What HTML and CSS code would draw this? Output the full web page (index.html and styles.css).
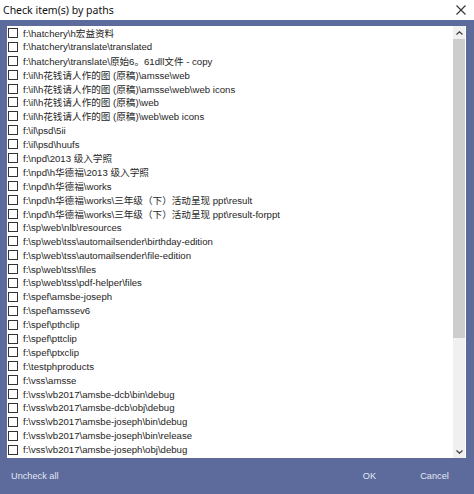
FILE: index.html
```html
<!DOCTYPE html>
<html lang="en">
<head>
<meta charset="utf-8">
<title>Check item(s) by paths</title>
<link rel="stylesheet" href="styles.css">
</head>
<body>
<div class="window">
  <header class="titlebar">
    <span class="title">Check item(s) by paths</span>
    <svg class="close" width="10" height="10" viewBox="0 0 10 10"><path d="M0.5 0.5 L9.5 9.5 M9.5 0.5 L0.5 9.5" stroke="#333" stroke-width="1.1" fill="none"/></svg>
  </header>
  <div class="frame">
    <div class="list">
      <ul class="items">
        <li class="item"><span class="box"></span><span class="path">f:\hatchery\h宏益资料</span></li>
        <li class="item"><span class="box"></span><span class="path">f:\hatchery\translate\translated</span></li>
        <li class="item"><span class="box"></span><span class="path">f:\hatchery\translate\原始6。61dll文件 - copy</span></li>
        <li class="item"><span class="box"></span><span class="path">f:\il\h花钱请人作的图 (原稿)\amsse\web</span></li>
        <li class="item"><span class="box"></span><span class="path">f:\il\h花钱请人作的图 (原稿)\amsse\web\web icons</span></li>
        <li class="item"><span class="box"></span><span class="path">f:\il\h花钱请人作的图 (原稿)\web</span></li>
        <li class="item"><span class="box"></span><span class="path">f:\il\h花钱请人作的图 (原稿)\web\web icons</span></li>
        <li class="item"><span class="box"></span><span class="path">f:\il\psd\5ii</span></li>
        <li class="item"><span class="box"></span><span class="path">f:\il\psd\huufs</span></li>
        <li class="item"><span class="box"></span><span class="path">f:\npd\2013 级入学照</span></li>
        <li class="item"><span class="box"></span><span class="path">f:\npd\h华德福\2013 级入学照</span></li>
        <li class="item"><span class="box"></span><span class="path">f:\npd\h华德福\works</span></li>
        <li class="item"><span class="box"></span><span class="path">f:\npd\h华德福\works\三年级（下）活动呈现 ppt\result</span></li>
        <li class="item"><span class="box"></span><span class="path">f:\npd\h华德福\works\三年级（下）活动呈现 ppt\result-forppt</span></li>
        <li class="item"><span class="box"></span><span class="path">f:\sp\web\nlb\resources</span></li>
        <li class="item"><span class="box"></span><span class="path">f:\sp\web\tss\automailsender\birthday-edition</span></li>
        <li class="item"><span class="box"></span><span class="path">f:\sp\web\tss\automailsender\file-edition</span></li>
        <li class="item"><span class="box"></span><span class="path">f:\sp\web\tss\files</span></li>
        <li class="item"><span class="box"></span><span class="path">f:\sp\web\tss\pdf-helper\files</span></li>
        <li class="item"><span class="box"></span><span class="path">f:\spef\amsbe-joseph</span></li>
        <li class="item"><span class="box"></span><span class="path">f:\spef\amssev6</span></li>
        <li class="item"><span class="box"></span><span class="path">f:\spef\pthclip</span></li>
        <li class="item"><span class="box"></span><span class="path">f:\spef\pttclip</span></li>
        <li class="item"><span class="box"></span><span class="path">f:\spef\ptxclip</span></li>
        <li class="item"><span class="box"></span><span class="path">f:\testphproducts</span></li>
        <li class="item"><span class="box"></span><span class="path">f:\vss\amsse</span></li>
        <li class="item"><span class="box"></span><span class="path">f:\vss\vb2017\amsbe-dcb\bin\debug</span></li>
        <li class="item"><span class="box"></span><span class="path">f:\vss\vb2017\amsbe-dcb\obj\debug</span></li>
        <li class="item"><span class="box"></span><span class="path">f:\vss\vb2017\amsbe-joseph\bin\debug</span></li>
        <li class="item"><span class="box"></span><span class="path">f:\vss\vb2017\amsbe-joseph\bin\release</span></li>
        <li class="item"><span class="box"></span><span class="path">f:\vss\vb2017\amsbe-joseph\obj\debug</span></li>
      </ul>
      <div class="scrollbar">
        <div class="arrow"><svg width="7" height="4" viewBox="0 0 7 4"><path d="M0.5 3.5 L3.5 0.8 L6.5 3.5" stroke="#444" stroke-width="1.3" fill="none"/></svg></div>
        <div class="thumb"></div>
        <div class="track"></div>
        <div class="arrow"><svg width="7" height="4" viewBox="0 0 7 4"><path d="M0.5 0.5 L3.5 3.2 L6.5 0.5" stroke="#444" stroke-width="1.3" fill="none"/></svg></div>
      </div>
    </div>
    <footer class="footer">
      <span class="btn btn-left">Uncheck all</span>
      <span class="spacer"></span>
      <span class="btn">OK</span>
      <span class="btn">Cancel</span>
    </footer>
  </div>
</div>
</body>
</html>
```
FILE: styles.css
```css
html, body {
  margin: 0;
  padding: 0;
}
body {
  width: 474px;
  height: 494px;
  overflow: hidden;
  font-family: "Liberation Sans", "Noto Sans CJK SC", sans-serif;
  background: #5d6b9c;
}
.window {
  display: flex;
  flex-direction: column;
  height: 494px;
}
.titlebar {
  height: 20px;
  background: #fff;
  display: flex;
  align-items: center;
  padding: 0 8px 0 3px;
  box-sizing: border-box;
}
.title {
  flex: 1;
  font-family: "Noto Sans", "Noto Sans CJK SC", sans-serif;
  font-size: 10.5px;
  color: #111;
}
.close {
  display: block;
}
.frame {
  flex: 1;
  display: flex;
  flex-direction: column;
  padding: 6px 8px 0 7px;
  background: #5d6b9c;
}
.list {
  height: 432px;
  background: #fff;
  display: flex;
  padding-right: 1px;
  overflow: hidden;
}
.items {
  flex: 1;
  list-style: none;
  margin: 0;
  padding: 0;
}
.item {
  height: 13.9px;
  display: flex;
  align-items: center;
  font-size: 9.6px;
  color: #1e1e1e;
  white-space: nowrap;
}
.box {
  width: 10px;
  height: 10px;
  box-sizing: border-box;
  border: 1px solid #333;
  background: #fff;
  margin-left: 1px;
  margin-right: 5px;
  flex: none;
}
.scrollbar {
  width: 12px;
  display: flex;
  flex-direction: column;
  background: #f0f0f0;
}
.arrow {
  height: 13px;
  display: flex;
  align-items: center;
  justify-content: center;
}
.arrow svg {
  display: block;
}
.thumb {
  height: 299px;
  background: #cdcdcd;
}
.track {
  flex: 1;
}
.footer {
  flex: 1;
  display: flex;
  align-items: center;
  margin-right: -8px;
  margin-left: -7px;
  padding-right: 7px;
}
.btn {
  width: 65px;
  text-align: center;
  font-size: 9.2px;
  color: #e3e8f5;
}
.btn-left {
  width: auto;
  padding-left: 11px;
  text-align: left;
}
.spacer {
  flex: 1;
}
```
